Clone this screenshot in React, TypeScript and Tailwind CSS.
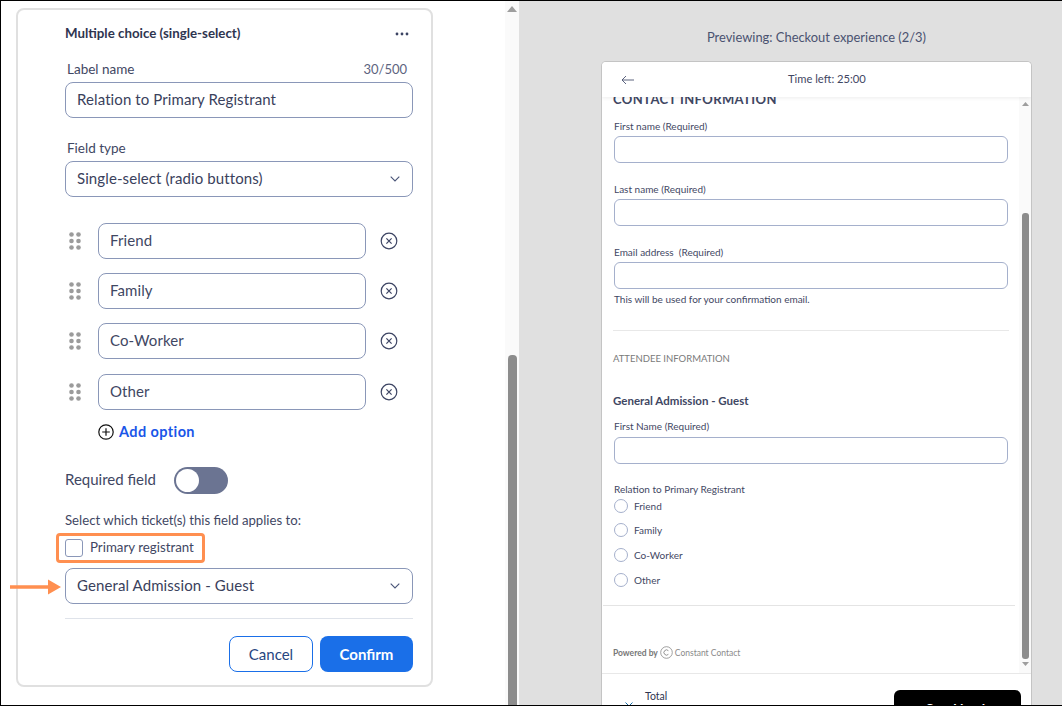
import React from "react";

function Chevron() {
  return (
    <svg width="10" height="6" viewBox="0 0 10 6" fill="none" className="shrink-0">
      <path d="M0.7 0.7 L5 5 L9.3 0.7" stroke="#4a5578" strokeWidth="1.1" />
    </svg>
  );
}

function Grip() {
  return (
    <svg width="12" height="18" viewBox="0 0 12 18" className="shrink-0">
      {[2.5, 9, 15.5].map((y) =>
        [2.5, 9.5].map((x) => <circle key={`${x}-${y}`} cx={x} cy={y} r="2.3" fill="#9b9b9b" />)
      )}
    </svg>
  );
}

function RemoveIcon() {
  return (
    <svg width="18" height="18" viewBox="0 0 18 18" fill="none" className="shrink-0">
      <circle cx="9" cy="9" r="7.8" stroke="#3c4463" strokeWidth="1.2" />
      <path d="M6.4 6.4 L11.6 11.6 M11.6 6.4 L6.4 11.6" stroke="#3c4463" strokeWidth="1.2" />
    </svg>
  );
}

function OptionRow({ label, mb }: { label: string; mb: string }) {
  return (
    <div className={`flex items-center ${mb}`}>
      <div className="w-[33px] pl-[4px] flex items-center">
        <Grip />
      </div>
      <div className="w-[268px] h-[36px] rounded-[8px] border border-[#8a97b8] flex items-center px-[11px] pb-px text-[15px] text-[#3f4763] tracking-[0.1px]">
        {label}
      </div>
      <div className="ml-[14px] -mt-[1px]">
        <RemoveIcon />
      </div>
    </div>
  );
}

function Field({ label, gap = "mt-[3px]" }: { label: string; gap?: string }) {
  return (
    <div>
      <div className="text-[10px] leading-[13px] text-[#3f4763]">{label}</div>
      <div className={`${gap} h-[27px] w-[394px] rounded-[6px] border border-[#a5b0cc]`} />
    </div>
  );
}

function Radio({ label, mb }: { label: string; mb: string }) {
  return (
    <div className={`flex items-center ${mb}`}>
      <div className="w-[14px] h-[14px] rounded-full border border-[#a5b0cc]" />
      <div className="ml-[6px] text-[10px] leading-[14px] text-[#3f4763]">{label}</div>
    </div>
  );
}

export default function App() {
  return (
    <div className="w-[1062px] h-[706px] overflow-hidden flex bg-white border-t border-l border-b border-black font-['Lato',sans-serif] text-[#3f4763]">
      {/* Left panel */}
      <div className="w-[518px] h-full flex shrink-0 bg-white">
        <div className="w-[504px] pl-[15px] pt-[7px]">
          <div className="w-[417px] h-[679px] rounded-[8px] border-2 border-[#e0e0e0] pl-[47px] pr-[18px] bg-white">
            <div className="flex items-center justify-between h-[33px] pt-[15px] pr-[3px]">
              <span className="text-[13.3px] font-bold text-[#2f3550]">Multiple choice (single-select)</span>
              <svg width="14" height="4" viewBox="0 0 14 4" className="mr-[1px]">
                <circle cx="2" cy="2" r="1.4" fill="#3c4463" />
                <circle cx="7" cy="2" r="1.4" fill="#3c4463" />
                <circle cx="12" cy="2" r="1.4" fill="#3c4463" />
              </svg>
            </div>
            <div className="flex justify-between pl-[2px] pr-[6px] mt-[18px] text-[13.5px] leading-[16px]">
              <span>Label name</span>
              <span className="text-[#5d6480] text-[13px]">30/500</span>
            </div>
            <div className="mt-[5px] h-[36px] rounded-[8px] border border-[#8a97b8] flex items-center px-[11px] pb-px text-[15px] tracking-[0.1px] text-[#3a415c]">
              Relation to Primary Registrant
            </div>
            <div className="mt-[22px] pl-[2px] text-[13.5px] leading-[16px]">Field type</div>
            <div className="mt-[5px] h-[36px] rounded-[8px] border border-[#8a97b8] flex items-center justify-between pl-[11px] pr-[12px] pb-px text-[15px] tracking-[0.1px] text-[#3a415c]">
              Single-select (radio buttons)
              <Chevron />
            </div>
            <div className="mt-[26px]">
              <OptionRow label="Friend" mb="mb-[14px]" />
              <OptionRow label="Family" mb="mb-[14px]" />
              <OptionRow label="Co-Worker" mb="mb-[15px]" />
              <OptionRow label="Other" mb="mb-0" />
            </div>
            <div className="mt-[13px] ml-[33px] flex items-center h-[18px]">
              <svg width="16" height="16" viewBox="0 0 16 16" fill="none">
                <circle cx="8" cy="8" r="7.2" stroke="#111" strokeWidth="1.2" />
                <path d="M8 4.2 V11.8 M4.2 8 H11.8" stroke="#111" strokeWidth="1.2" />
              </svg>
              <span className="ml-[5px] text-[14.5px] font-bold text-[#1a56e8] tracking-[0.4px]">Add option</span>
            </div>
            <div className="mt-[26px] flex items-center h-[27px]">
              <span className="text-[15px] -mt-[2px]">Required field</span>
              <div className="ml-[18px] w-[54px] h-[27px] rounded-full bg-[#6b7492] flex items-center pl-[2px]">
                <div className="w-[23px] h-[23px] rounded-full bg-white" />
              </div>
            </div>
            <div className="mt-[18px] text-[13.2px] leading-[16px]">Select which ticket(s) this field applies to:</div>
            <div className="mt-[5px] -ml-[9px] w-[149px] h-[30px] rounded-[4px] border-[3px] border-[#ff8f50] flex items-center pl-[6px]">
              <div className="w-[18px] h-[18px] rounded-[3px] border border-[#8a97b8]" />
              <span className="ml-[7px] text-[13.3px]">Primary registrant</span>
            </div>
            <div className="relative mt-[5px] h-[36px] rounded-[8px] border border-[#8a97b8] flex items-center justify-between pl-[11px] pr-[12px] pb-px text-[15px] tracking-[0.1px] text-[#3a415c]">
              General Admission - Guest
              <Chevron />
              <svg width="52" height="16" viewBox="0 0 52 16" className="absolute -left-[56px] top-[10px]">
                <path d="M0 6.3 H38 V0.5 L51 8 L38 15.5 V9.7 H0 Z" fill="#ff8f50" />
              </svg>
            </div>
            <div className="mt-[14px] border-t border-[#dfe3ea]" />
            <div className="mt-[17px] flex justify-end gap-[7px]">
              <div className="w-[84px] h-[36px] rounded-[8px] border border-[#1a6fe8] flex items-center justify-center text-[15px] text-[#27467f]">
                Cancel
              </div>
              <div className="w-[93px] h-[36px] rounded-[8px] bg-[#1a6fe8] flex items-center justify-center text-[15px] font-bold text-white">
                Confirm
              </div>
            </div>
          </div>
        </div>
        {/* Left scrollbar */}
        <div className="w-[14px] h-full bg-[#fafafa] flex flex-col items-center">
          <svg width="10" height="6" viewBox="0 0 10 6" className="mt-[5px]">
            <path d="M5 0 L10 6 H0 Z" fill="#9e9e9e" />
          </svg>
          <div className="mt-[343px] w-[9px] flex-1 rounded-t-[4px] bg-[#8c8c8c]" />
        </div>
      </div>

      {/* Right panel */}
      <div className="flex-1 h-full bg-[#e0e0e0] flex flex-col pl-[82px] pr-[30px]">
        <div className="h-[60px] shrink-0 flex items-start justify-center pt-[27px] text-[12.9px] leading-[18px] text-[#4a5270]">
          Previewing: Checkout experience (2/3)
        </div>
        <div className="flex-1 min-h-0 rounded-t-[5px] border border-b-0 border-[#c4c4c4] bg-white flex flex-col overflow-hidden">
          <div className="relative z-10 h-[35px] shrink-0 bg-white shadow-[0_1px_4px_rgba(0,0,0,0.08)] flex items-center">
            <svg width="14" height="10" viewBox="0 0 14 10" fill="none" className="ml-[19px]">
              <path d="M13 5 H1 M5 1 L1 5 L5 9" stroke="#4a5270" strokeWidth="0.9" />
            </svg>
            <span className="ml-[153px] text-[11.2px] text-[#3f4763]">Time left: 25:00</span>
          </div>
          <div className="h-[576px] shrink-0 flex overflow-hidden">
            <div className="flex-1 min-w-0 overflow-hidden pl-[12px]">
              <div className="-mt-[5px] -ml-px text-[13px] leading-[14px] font-bold text-[#3f4763] tracking-[0.4px]">CONTACT INFORMATION</div>
              <div className="mt-[14px]"><Field label="First name (Required)" /></div>
              <div className="mt-[20px]"><Field label="Last name (Required)" /></div>
              <div className="mt-[20px]"><Field label={"Email address\u00A0 (Required)"} /></div>
              <div className="mt-[3px] text-[10px] leading-[14px] text-[#3f4763]">This will be used for your confirmation email.</div>
              <div className="mt-[24px] w-[396px] -ml-px border-t border-[#e8e8e8]" />
              <div className="mt-[22px] -ml-px text-[9.5px] leading-[12px] text-[#7a7a7a]">ATTENDEE INFORMATION</div>
              <div className="mt-[29px] -ml-px text-[11.5px] leading-[14px] font-bold text-[#3f4763]">General Admission - Guest</div>
              <div className="mt-[12px]"><Field label="First Name (Required)" gap="mt-[4px]" /></div>
              <div className="mt-[19px] text-[10px] leading-[13px] text-[#3f4763]">Relation to Primary Registrant</div>
              <div className="mt-[3px]">
                <Radio label="Friend" mb="mb-[10px]" />
                <Radio label="Family" mb="mb-[11px]" />
                <Radio label="Co-Worker" mb="mb-[11px]" />
                <Radio label="Other" mb="mb-0" />
              </div>
              <div className="mt-[18px] -ml-[11px] w-[412px] border-t border-[#e4e4e4]" />
              <div className="mt-[40px] -ml-px flex items-center text-[8.5px] leading-[12px] text-[#777]">
                <span className="font-bold">Powered by</span>
                <svg width="13" height="13" viewBox="0 0 13 13" fill="none" className="ml-[2px]">
                  <circle cx="6.5" cy="6.5" r="5.8" stroke="#888" strokeWidth="0.8" />
                  <path d="M8.4 4.7 A2.6 2.6 0 1 0 8.4 8.3" stroke="#888" strokeWidth="0.9" />
                </svg>
                <span className="ml-[2px] text-[8.5px] text-[#8a8a8a]">Constant Contact</span>
              </div>
            </div>
            <div className="w-[12px] shrink-0 bg-[#fafafa] flex flex-col items-center">
              <svg width="7" height="4" viewBox="0 0 7 4" className="mt-[5px]">
                <path d="M3.5 0 L7 4 H0 Z" fill="#9e9e9e" />
              </svg>
              <div className="mt-[107px] w-[7px] h-[446px] rounded-[3px] bg-[#8c8c8c]" />
              <svg width="7" height="4" viewBox="0 0 7 4" className="mt-[3px]">
                <path d="M0 0 H7 L3.5 4 Z" fill="#9e9e9e" />
              </svg>
            </div>
          </div>
          <div className="flex-1 min-h-0 border-t border-[#e8e8e8] flex items-start justify-between pr-[10px] overflow-hidden">
            <div className="flex pl-[23px] pt-[16px] text-[10.5px] leading-[12px] text-[#2f3550]">
              <div className="pt-[12px] pr-[12px]">
                <svg width="8" height="5" viewBox="0 0 8 5" fill="none">
                  <path d="M0.5 0.5 L4 4 L7.5 0.5" stroke="#1a6fa8" strokeWidth="1" />
                </svg>
              </div>
              <div>Total</div>
            </div>
            <div className="mt-[16px] w-[127px] h-[40px] rounded-[6px] bg-black text-white text-[14px] leading-[16px] font-bold flex items-start justify-center pt-[11px]">
              Send back
            </div>
          </div>
        </div>
      </div>
    </div>
  );
}
